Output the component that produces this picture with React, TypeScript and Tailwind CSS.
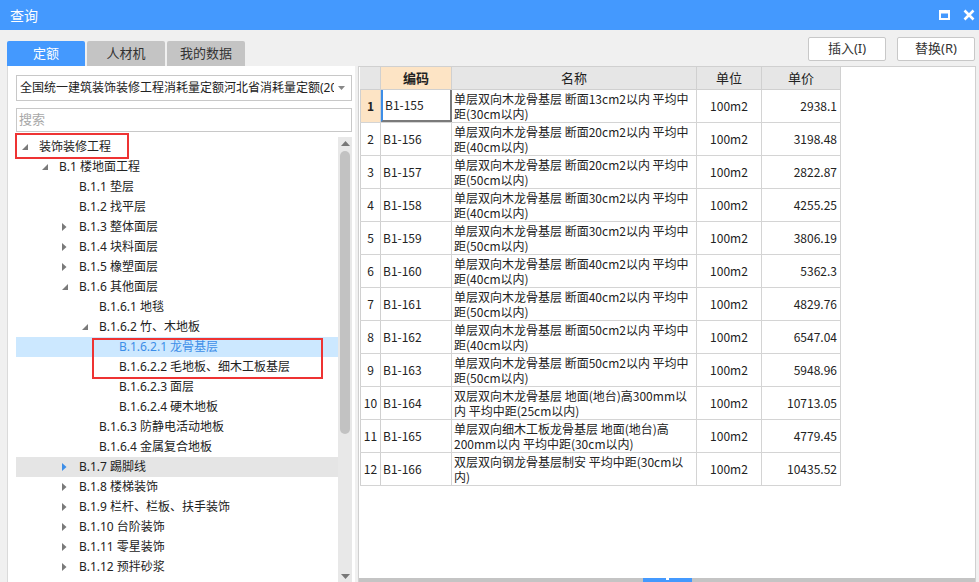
import React from 'react';

const treeRows = [
  { label: '装饰装修工程', level: 0, icon: 'open' },
  { label: 'B.1 楼地面工程', level: 1, icon: 'open' },
  { label: 'B.1.1 垫层', level: 2, icon: '' },
  { label: 'B.1.2 找平层', level: 2, icon: '' },
  { label: 'B.1.3 整体面层', level: 2, icon: 'closed' },
  { label: 'B.1.4 块料面层', level: 2, icon: 'closed' },
  { label: 'B.1.5 橡塑面层', level: 2, icon: 'closed' },
  { label: 'B.1.6 其他面层', level: 2, icon: 'open' },
  { label: 'B.1.6.1 地毯', level: 3, icon: '' },
  { label: 'B.1.6.2 竹、木地板', level: 3, icon: 'open' },
  { label: 'B.1.6.2.1 龙骨基层', level: 4, icon: '', selected: true },
  { label: 'B.1.6.2.2 毛地板、细木工板基层', level: 4, icon: '' },
  { label: 'B.1.6.2.3 面层', level: 4, icon: '' },
  { label: 'B.1.6.2.4 硬木地板', level: 4, icon: '' },
  { label: 'B.1.6.3 防静电活动地板', level: 3, icon: '' },
  { label: 'B.1.6.4 金属复合地板', level: 3, icon: '' },
  { label: 'B.1.7 踢脚线', level: 2, icon: 'closed', hover: true },
  { label: 'B.1.8 楼梯装饰', level: 2, icon: 'closed' },
  { label: 'B.1.9 栏杆、栏板、扶手装饰', level: 2, icon: 'closed' },
  { label: 'B.1.10 台阶装饰', level: 2, icon: 'closed' },
  { label: 'B.1.11 零星装饰', level: 2, icon: 'closed' },
  { label: 'B.1.12 预拌砂浆', level: 2, icon: 'closed' },
];

const rows = [
  { code: 'B1-155', name: ['单层双向木龙骨基层 断面13cm2以内 平均中', '距(30cm以内)'], price: '2938.1' },
  { code: 'B1-156', name: ['单层双向木龙骨基层 断面20cm2以内 平均中', '距(40cm以内)'], price: '3198.48' },
  { code: 'B1-157', name: ['单层双向木龙骨基层 断面20cm2以内 平均中', '距(50cm以内)'], price: '2822.87' },
  { code: 'B1-158', name: ['单层双向木龙骨基层 断面30cm2以内 平均中', '距(40cm以内)'], price: '4255.25' },
  { code: 'B1-159', name: ['单层双向木龙骨基层 断面30cm2以内 平均中', '距(50cm以内)'], price: '3806.19' },
  { code: 'B1-160', name: ['单层双向木龙骨基层 断面40cm2以内 平均中', '距(40cm以内)'], price: '5362.3' },
  { code: 'B1-161', name: ['单层双向木龙骨基层 断面40cm2以内 平均中', '距(50cm以内)'], price: '4829.76' },
  { code: 'B1-162', name: ['单层双向木龙骨基层 断面50cm2以内 平均中', '距(40cm以内)'], price: '6547.04' },
  { code: 'B1-163', name: ['单层双向木龙骨基层 断面50cm2以内 平均中', '距(50cm以内)'], price: '5948.96' },
  { code: 'B1-164', name: ['双层双向木龙骨基层 地面(地台)高300mm以', '内 平均中距(25cm以内)'], price: '10713.05' },
  { code: 'B1-165', name: ['单层双向细木工板龙骨基层 地面(地台)高', '200mm以内 平均中距(30cm以内)'], price: '4779.45' },
  { code: 'B1-166', name: ['双层双向钢龙骨基层制安 平均中距(30cm以', '内)'], price: '10435.52' },
];

const uiFont = { fontFamily: '"Noto Sans", "Noto Sans CJK SC", sans-serif' };
const gridFont = { fontFamily: '"Noto Sans CJK SC", sans-serif' };

function Caret({ type, blue }: { type: string; blue?: boolean }) {
  if (type === 'open') {
    return (
      <svg width="6" height="6" viewBox="0 0 6 6">
        <path d="M6 0 L6 6 L0 6 Z" fill="#7a7a7a" />
      </svg>
    );
  }
  if (type === 'closed') {
    return (
      <svg width="5" height="8" viewBox="0 0 5 8">
        <path d="M0 0 L4.5 4 L0 8 Z" fill={blue ? '#3d8ee8' : '#7a7a7a'} />
      </svg>
    );
  }
  return null;
}

export default function App() {
  return (
    <div className="w-[979px] h-[582px] bg-[#f0f0f0] overflow-hidden flex flex-col text-[#222]" style={uiFont}>
      {/* Title bar */}
      <div className="h-[30px] bg-[#4499fe] flex items-center justify-between pl-[10px] pr-[4px] shrink-0">
        <span className="text-white text-[14px]">查询</span>
        <div className="flex items-center gap-[13px]">
          <svg width="11" height="10" viewBox="0 0 11 10">
            <rect x="1" y="1" width="9" height="8" fill="none" stroke="white" strokeWidth="2" />
            <rect x="1" y="1" width="9" height="2.5" fill="white" />
          </svg>
          <svg width="12" height="12" viewBox="0 0 12 12">
            <path d="M1.5 1.5 L10.5 10.5 M10.5 1.5 L1.5 10.5" stroke="white" strokeWidth="2.6" />
          </svg>
        </div>
      </div>

      <div className="flex-1 flex pl-[7px] pr-[3px] gap-[3px] min-h-0">
        {/* Left column */}
        <div className="w-[348px] flex flex-col">
          <div className="h-[36px] pt-[11px] flex gap-[2px] shrink-0">
            <div className="w-[78px] h-[25px] bg-[#4499fe] text-white text-[13px] flex items-center justify-center rounded-t-[2px]">定额</div>
            <div className="w-[78px] h-[25px] bg-[#c4c4c4] text-[#333] text-[13px] flex items-center justify-center rounded-t-[2px]">人材机</div>
            <div className="w-[78px] h-[25px] bg-[#c4c4c4] text-[#333] text-[13px] flex items-center justify-center rounded-t-[2px]">我的数据</div>
          </div>
          <div className="flex-1 bg-white border-l border-[#dadada] pl-[8px] pr-[3px] pt-[9px] flex flex-col min-h-0 relative">
            <div className="h-[26px] border border-[#c8c8c8] flex items-center pl-[3px] pr-[6px] shrink-0">
              <span className="flex-1 text-[12px] whitespace-nowrap overflow-hidden">全国统一建筑装饰装修工程消耗量定额河北省消耗量定额(2013)</span>
              <svg width="7" height="4" viewBox="0 0 7 4" className="ml-[4px]">
                <path d="M0 0 L7 0 L3.5 4 Z" fill="#888" />
              </svg>
            </div>
            <div className="h-[24px] mt-[7px] border border-[#c8c8c8] flex items-center pl-[2px] text-[13px] text-[#a8a8a8] shrink-0">搜索</div>
            <div className="flex-1 flex mt-[5px] min-h-0">
              <div className="flex-1 overflow-hidden">
                {treeRows.map((r) => (
                  <div
                    key={r.label}
                    className={
                      'h-[20px] flex items-center text-[12px] whitespace-nowrap ' +
                      (r.selected ? 'bg-[#cce8ff] text-[#3d8ee8]' : r.hover ? 'bg-[#e5e5e5]' : '')
                    }
                  >
                    <div className="w-[23px] shrink-0 flex items-center pl-[6px]" style={{ marginLeft: r.level * 20 }}>
                      <Caret type={r.icon} blue={r.hover} />
                    </div>
                    <span>{r.label}</span>
                  </div>
                ))}
              </div>
              <div className="w-[14px] bg-[#e8e8e8] flex flex-col items-center shrink-0">
                <svg width="9" height="5" viewBox="0 0 9 5" className="mt-[4px]">
                  <path d="M0 5 L4.5 0 L9 5 Z" fill="#777" />
                </svg>
                <div className="w-[10px] h-[283px] mt-[5px] bg-[#c2c2c2] rounded-[5px]" />
                <div className="flex-1" />
                <svg width="9" height="5" viewBox="0 0 9 5" className="mb-[3px]">
                  <path d="M0 0 L9 0 L4.5 5 Z" fill="#777" />
                </svg>
              </div>
            </div>
            {/* annotation boxes */}
            <div className="absolute left-[7px] top-[67px] w-[114px] h-[26px] border-2 border-[#ee3333]" />
            <div className="absolute left-[84px] top-[272px] w-[231px] h-[41px] border-2 border-[#ee3333]" />
          </div>
        </div>

        {/* Right column */}
        <div className="flex-1 flex flex-col">
          <div className="h-[36px] pt-[7px] flex justify-end gap-[11px] pr-[1px] shrink-0">
            <button className="w-[78px] h-[24px] bg-white border border-[#c8c8c8] rounded-[2px] text-[13px] text-[#333]">插入(I)</button>
            <button className="w-[78px] h-[24px] bg-white border border-[#c8c8c8] rounded-[2px] text-[13px] text-[#333]">替换(R)</button>
          </div>
          <div className="flex-1 bg-white border border-[#d0d0d0] border-b-0 flex flex-col min-h-0">
            <div className="pl-[1px] text-[12px]" style={gridFont}>
              <div className="flex h-[23px] bg-[#e6e6e6] border-b border-[#d0d0d0] w-[481px]">
                <div className="w-[21px] border-r border-[#d0d0d0]" />
                <div className="w-[71px] bg-[#fde4c5] border-r border-[#d0d0d0] flex items-center justify-center font-bold text-[13px]">编码</div>
                <div className="w-[245px] border-r border-[#d0d0d0] flex items-center justify-center text-[13px]">名称</div>
                <div className="w-[65px] border-r border-[#d0d0d0] flex items-center justify-center text-[13px]">单位</div>
                <div className="w-[79px] border-r border-[#d0d0d0] flex items-center justify-center text-[13px]">单价</div>
              </div>
              {rows.map((r, i) => (
                <div key={r.code} className="flex h-[33px] border-b border-[#d4d4d4] w-[481px]">
                  <div
                    className={
                      'w-[21px] border-r border-l border-[#d0d0d0] flex items-center justify-center ' +
                      (i === 0 ? 'bg-[#fde4c5] font-bold' : '')
                    }
                  >
                    {i + 1}
                  </div>
                  <div
                    className={
                      'w-[71px] flex items-center pl-[2px] ' +
                      (i === 0
                        ? 'border-l-2 border-l-[#3d8ee8] border-r-2 border-r-[#7a7a7a] border-b-2 border-b-[#7a7a7a]'
                        : 'border-r border-[#d4d4d4]')
                    }
                  >
                    {r.code}
                  </div>
                  <div className="w-[245px] border-r border-[#d4d4d4] pl-[2px] pt-[1px] leading-[15px] overflow-hidden whitespace-nowrap">
                    <div>{r.name[0]}</div>
                    <div>{r.name[1]}</div>
                  </div>
                  <div className="w-[65px] border-r border-[#d4d4d4] flex items-center justify-center">100m2</div>
                  <div className="w-[79px] border-r border-[#d4d4d4] flex items-center justify-end pr-[3px]">{r.price}</div>
                </div>
              ))}
            </div>
            <div className="flex-1" />
            <div className="h-[4px] bg-[#c4c4c4] flex">
              <div className="ml-[284px] w-[49px] h-[4px] bg-[#4499fe] flex justify-center">
                <div className="w-[3px] h-[2px] bg-white" />
              </div>
            </div>
          </div>
        </div>
      </div>
    </div>
  );
}
